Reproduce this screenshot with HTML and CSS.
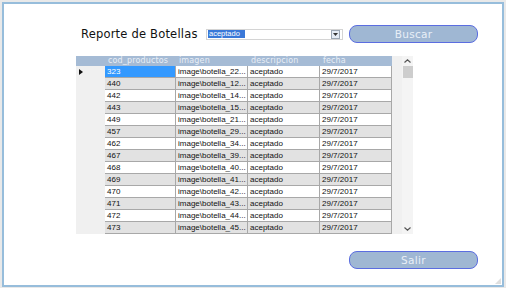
FILE: index.html
```html
<!DOCTYPE html>
<html>
<head>
<meta charset="utf-8">
<link rel="stylesheet" href="styles.css">
</head>
<body>
<div class="window">
  <div class="topbar">
    <div class="title">Reporte de Botellas</div>
    <div class="combo">
      <span class="sel">aceptado</span>
      <span class="drop"><svg width="5" height="3" viewBox="0 0 5 3"><path d="M0 0H5L2.5 3Z" fill="#333"/></svg></span>
    </div>
    <div class="btn">Buscar</div>
  </div>
  <div class="grid">
    <div class="gridmain">
      <div class="row head">
        <div class="rh"></div>
        <div class="c c1">cod_productos</div>
        <div class="c">imagen</div>
        <div class="c">descripcion</div>
        <div class="c">fecha</div>
      </div>
      <div class="row"><div class="rh"><svg width="4" height="6" viewBox="0 0 4 6"><path d="M0 0L4 3L0 6Z" fill="#111"/></svg></div><div class="c c1 selc">323</div><div class="c">image\botella_22...</div><div class="c">aceptado</div><div class="c">29/7/2017</div></div>
      <div class="row alt"><div class="rh"></div><div class="c c1">440</div><div class="c">image\botella_12...</div><div class="c">aceptado</div><div class="c">29/7/2017</div></div>
      <div class="row"><div class="rh"></div><div class="c c1">442</div><div class="c">image\botella_14...</div><div class="c">aceptado</div><div class="c">29/7/2017</div></div>
      <div class="row alt"><div class="rh"></div><div class="c c1">443</div><div class="c">image\botella_15...</div><div class="c">aceptado</div><div class="c">29/7/2017</div></div>
      <div class="row"><div class="rh"></div><div class="c c1">449</div><div class="c">image\botella_21...</div><div class="c">aceptado</div><div class="c">29/7/2017</div></div>
      <div class="row alt"><div class="rh"></div><div class="c c1">457</div><div class="c">image\botella_29...</div><div class="c">aceptado</div><div class="c">29/7/2017</div></div>
      <div class="row"><div class="rh"></div><div class="c c1">462</div><div class="c">image\botella_34...</div><div class="c">aceptado</div><div class="c">29/7/2017</div></div>
      <div class="row alt"><div class="rh"></div><div class="c c1">467</div><div class="c">image\botella_39...</div><div class="c">aceptado</div><div class="c">29/7/2017</div></div>
      <div class="row"><div class="rh"></div><div class="c c1">468</div><div class="c">image\botella_40...</div><div class="c">aceptado</div><div class="c">29/7/2017</div></div>
      <div class="row alt"><div class="rh"></div><div class="c c1">469</div><div class="c">image\botella_41...</div><div class="c">aceptado</div><div class="c">29/7/2017</div></div>
      <div class="row"><div class="rh"></div><div class="c c1">470</div><div class="c">image\botella_42...</div><div class="c">aceptado</div><div class="c">29/7/2017</div></div>
      <div class="row alt"><div class="rh"></div><div class="c c1">471</div><div class="c">image\botella_43...</div><div class="c">aceptado</div><div class="c">29/7/2017</div></div>
      <div class="row"><div class="rh"></div><div class="c c1">472</div><div class="c">image\botella_44...</div><div class="c">aceptado</div><div class="c">29/7/2017</div></div>
      <div class="row alt"><div class="rh"></div><div class="c c1">473</div><div class="c">image\botella_45...</div><div class="c">aceptado</div><div class="c">29/7/2017</div></div>
      <div class="row"><div class="rh"></div><div class="c c1">474</div><div class="c">image\botella_46...</div><div class="c">aceptado</div><div class="c">29/7/2017</div></div>
    </div>
    <div class="sbar">
      <svg class="arr" width="7" height="4" viewBox="0 0 7 4"><path d="M0.5 3.5L3.5 0.8L6.5 3.5" fill="none" stroke="#555" stroke-width="1.2"/></svg>
      <div class="thumb"></div>
      <div class="track"></div>
      <svg class="arr" width="7" height="4" viewBox="0 0 7 4"><path d="M0.5 0.5L3.5 3.2L6.5 0.5" fill="none" stroke="#555" stroke-width="1.2"/></svg>
    </div>
  </div>
  <div class="bottombar">
    <div class="btn">Salir</div>
  </div>
  <div class="grip"></div>
</div>
</body>
</html>
```
FILE: styles.css
```css
html, body {
  margin: 0;
  padding: 0;
  background: #e9e9e9;
}
body {
  padding: 2px 0 0 2px;
  width: 506px;
  height: 288px;
  box-sizing: border-box;
  overflow: hidden;
}
.window {
  position: relative;
  width: 502px;
  height: 285px;
  box-sizing: border-box;
  border: 2px solid #97bddb;
  background: #ffffff;
  font-family: "DejaVu Sans", sans-serif;
}
.topbar {
  display: flex;
  align-items: center;
  margin-top: 21px;
  padding-left: 77px;
  height: 18px;
}
.title {
  width: 125px;
  font-size: 11.5px;
  color: #111;
  letter-spacing: 0.2px;
  white-space: nowrap;
}
.combo {
  width: 137px;
  height: 11px;
  box-sizing: border-box;
  border: 1px solid #d4d4d4;
  display: flex;
  align-items: center;
  justify-content: space-between;
  padding: 0 2px 0 1px;
}
.sel {
  background: #3a78d8;
  color: #fff;
  font-family: "Liberation Sans", Arial, sans-serif;
  font-size: 7.5px;
  line-height: 8px;
  padding: 0 1px;
  width: 35px;
}
.drop {
  width: 7px;
  height: 7px;
  border: 1px solid #9aa6b4;
  background: #e4ecf6;
  display: flex;
  align-items: center;
  justify-content: center;
}
.btn {
  margin-left: 6px;
  width: 129px;
  height: 18px;
  box-sizing: border-box;
  border: 1.5px solid #5b6de0;
  border-radius: 8px;
  background: #9fb7d3;
  color: #e9eff7;
  font-size: 10.5px;
  display: flex;
  align-items: center;
  justify-content: center;
  letter-spacing: 0.3px;
}
.grid {
  margin: 13px 0 0 72px;
  width: 337px;
  height: 178px;
  display: flex;
  background: #f0f0f0;
  overflow: hidden;
}
.gridmain {
  width: 326px;
  height: 178px;
  overflow: hidden;
  background: #f0f0f0;
}
.row {
  display: flex;
  height: 12px;
  width: 316px;
  font-family: "Liberation Sans", Arial, sans-serif;
  font-size: 8px;
  color: #111;
}
.row.head {
  height: 10px;
  background: #a5bbd5;
  color: #e8eef6;
  font-family: "DejaVu Sans", sans-serif;
  font-size: 8px;
  letter-spacing: 0.15px;
}
.rh {
  width: 29px;
  flex: none;
  display: flex;
  align-items: center;
  padding-left: 3px;
  box-sizing: border-box;
}
.c {
  width: 72px;
  flex: none;
  box-sizing: border-box;
  padding-left: 2px;
  background: #ffffff;
  border-right: 1px solid #a8a8a8;
  border-bottom: 1px solid #a8a8a8;
  line-height: 11px;
  white-space: nowrap;
  overflow: hidden;
}
.c.c1 {
  width: 71px;
}
.row.alt .c {
  background: #e2e2e2;
}
.row.head .c {
  background: transparent;
  border: none;
  line-height: 10px;
  padding-left: 3px;
}
.c.selc {
  background: #3399ff;
  color: #fff;
}
.sbar {
  width: 11px;
  height: 178px;
  display: flex;
  flex-direction: column;
  align-items: center;
  background: #f4f4f4;
}
.arr {
  margin: 3px 0;
  flex: none;
}
.thumb {
  width: 10px;
  height: 12px;
  background: #cdcdcd;
  flex: none;
}
.track {
  flex: 1;
}
.bottombar {
  margin-top: 17px;
  padding-left: 339px;
}
.grip {
  position: absolute;
  right: 1px;
  bottom: 1px;
  width: 6px;
  height: 6px;
  background: radial-gradient(circle, #b8b8b8 0.6px, transparent 0.8px) 0 0 / 2px 2px;
  clip-path: polygon(100% 0, 100% 100%, 0 100%);
}
```
